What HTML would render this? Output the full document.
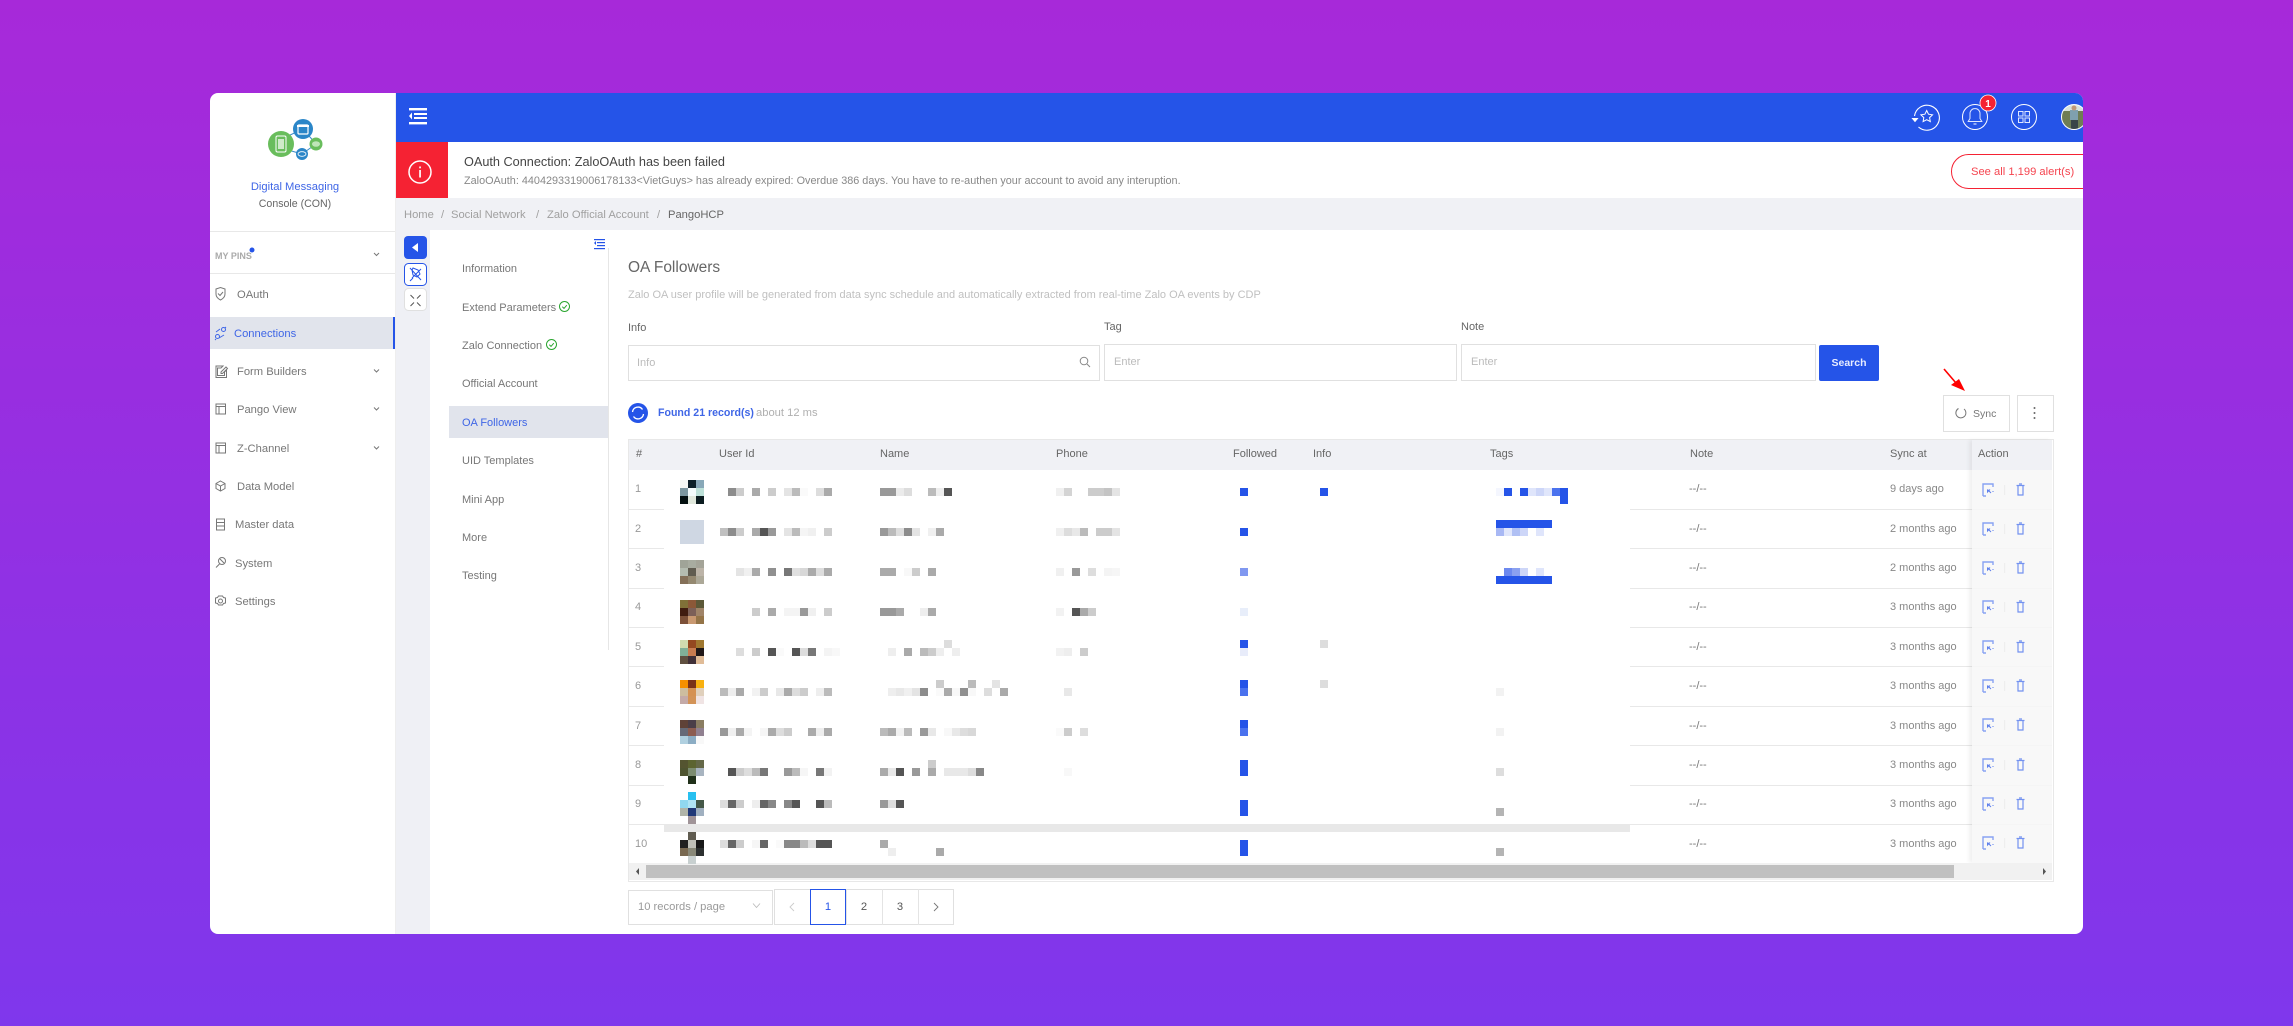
<!DOCTYPE html>
<html><head><meta charset="utf-8"><title>OA Followers</title>
<style>
html,body{margin:0;padding:0;width:2293px;height:1026px;overflow:hidden}
body{background:linear-gradient(180deg,#a729d9 0%,#7f37ec 100%);font-family:"Liberation Sans",sans-serif;position:relative}
#card{position:absolute;left:210px;top:93px;width:1873px;height:841px;border-radius:8px;overflow:hidden;background:#fff}
#in{position:absolute;left:-210px;top:-93px;width:2293px;height:1026px}
.b{position:absolute}
.t{position:absolute;white-space:nowrap;line-height:20px;height:20px;font-size:12px;color:#777;filter:blur(.25px)}
svg{position:absolute;left:0;top:0}
.m rect{width:1px;height:1px}
</style></head><body>
<div id="card"><div id="in">
<div class="b" style="left:396px;top:93px;width:1687px;height:49px;background:#2554e8"></div>
<div class="b" style="left:396px;top:142px;width:1687px;height:56px;background:#fff"></div>
<div class="b" style="left:396px;top:142px;width:52px;height:56px;background:#f52233"></div>
<div class="b" style="left:396px;top:198px;width:1687px;height:32px;background:#f0f1f5"></div>
<div class="b" style="left:395px;top:230px;width:35px;height:704px;background:#eff0f5"></div>
<div class="b" style="left:395px;top:93px;width:1px;height:841px;background:#eee"></div>
<div class="b" style="left:210px;top:231px;width:185px;height:1px;background:#e8e8e8"></div>
<div class="b" style="left:210px;top:273px;width:185px;height:1px;background:#e8e8e8"></div>
<div class="b" style="left:210px;top:317px;width:185px;height:32px;background:#e1e4ec"></div>
<div class="b" style="left:393px;top:317px;width:2px;height:32px;background:#2554e8"></div>
<div class="b" style="left:449px;top:406px;width:159px;height:32px;background:#e1e4ec"></div>
<div class="b" style="left:608px;top:248px;width:1px;height:402px;background:#e6e6e6"></div>

<span class="t" style="left:240px;width:110px;text-align:center;top:177px;font-size:11.2px;color:#3f66e6">Digital Messaging</span>
<span class="t" style="left:240px;width:110px;text-align:center;top:194px;font-size:10.6px;color:#666">Console (CON)</span>
<span class="t" style="left:215px;top:246px;font-size:9px;font-weight:bold;color:#aaa">MY PINS</span>
<span class="t" style="left:237px;top:285px;font-size:11.2px">OAuth</span>
<span class="t" style="left:234px;top:324px;font-size:11.2px;color:#3f66e6">Connections</span>
<span class="t" style="left:237px;top:362px;font-size:11.2px">Form Builders</span>
<span class="t" style="left:237px;top:400px;font-size:11.2px">Pango View</span>
<span class="t" style="left:237px;top:439px;font-size:11.2px">Z-Channel</span>
<span class="t" style="left:237px;top:477px;font-size:11.2px">Data Model</span>
<span class="t" style="left:235px;top:515px;font-size:11.2px">Master data</span>
<span class="t" style="left:235px;top:554px;font-size:11.2px">System</span>
<span class="t" style="left:235px;top:592px;font-size:11.2px">Settings</span>

<span class="t" style="left:462px;top:259px;font-size:11px">Information</span>
<span class="t" style="left:462px;top:298px;font-size:11px">Extend Parameters</span>
<span class="t" style="left:462px;top:336px;font-size:11px">Zalo Connection</span>
<span class="t" style="left:462px;top:374px;font-size:11px">Official Account</span>
<span class="t" style="left:462px;top:413px;font-size:11px;color:#3f66e6">OA Followers</span>
<span class="t" style="left:462px;top:451px;font-size:11px">UID Templates</span>
<span class="t" style="left:462px;top:490px;font-size:11px">Mini App</span>
<span class="t" style="left:462px;top:528px;font-size:11px">More</span>
<span class="t" style="left:462px;top:566px;font-size:11px">Testing</span>

<span class="t" style="left:464px;top:152px;font-size:12.7px;color:#444">OAuth Connection: ZaloOAuth has been failed</span>
<span class="t" style="left:464px;top:171px;font-size:10.85px;color:#888">ZaloOAuth: 4404293319006178133&lt;VietGuys&gt; has already expired: Overdue 386 days. You have to re-authen your account to avoid any interuption.</span>
<span class="t" style="left:404px;top:205px;font-size:11.2px;color:#a0a0a0">Home</span>
<span class="t" style="left:441px;top:205px;font-size:11.2px;color:#a0a0a0">/</span>
<span class="t" style="left:451px;top:205px;font-size:11.2px;color:#a0a0a0">Social Network</span>
<span class="t" style="left:536px;top:205px;font-size:11.2px;color:#a0a0a0">/</span>
<span class="t" style="left:547px;top:205px;font-size:11.2px;color:#a0a0a0">Zalo Official Account</span>
<span class="t" style="left:657px;top:205px;font-size:11.2px;color:#a0a0a0">/</span>
<span class="t" style="left:668px;top:205px;font-size:11.2px;color:#666">PangoHCP</span>

<div class="b" style="left:1951px;top:154px;width:160px;height:33px;border:1px solid #f52233;border-radius:18px"></div>
<span class="t" style="left:1971px;top:162px;font-size:11.2px;color:#f5444f">See all 1,199 alert(s)</span>

<span class="t" style="left:628px;top:258px;font-size:15.5px;color:#666">OA Followers</span>
<span class="t" style="left:628px;top:285px;font-size:11px;color:#c0c0c0">Zalo OA user profile will be generated from data sync schedule and automatically extracted from real-time Zalo OA events by CDP</span>
<span class="t" style="left:628px;top:318px;font-size:11px;color:#666">Info</span>
<span class="t" style="left:1104px;top:317px;font-size:11px;color:#666">Tag</span>
<span class="t" style="left:1461px;top:317px;font-size:11px;color:#666">Note</span>
<div class="b" style="left:628px;top:345px;width:470px;height:34px;border:1px solid #e0e0e0"></div>
<div class="b" style="left:1104px;top:344px;width:351px;height:35px;border:1px solid #e0e0e0"></div>
<div class="b" style="left:1461px;top:344px;width:353px;height:35px;border:1px solid #e0e0e0"></div>
<span class="t" style="left:637px;top:353px;font-size:11px;color:#bbb">Info</span>
<span class="t" style="left:1114px;top:352px;font-size:11px;color:#bbb">Enter</span>
<span class="t" style="left:1471px;top:352px;font-size:11px;color:#bbb">Enter</span>
<div class="b" style="left:1819px;top:345px;width:60px;height:36px;background:#2554e8;border-radius:2px"></div>
<span class="t" style="left:1819px;width:60px;text-align:center;top:353px;font-size:10.5px;font-weight:bold;color:#e8edff">Search</span>

<span class="t" style="left:658px;top:403px;font-size:10.6px;font-weight:bold;color:#3f66e6">Found 21 record(s)</span>
<span class="t" style="left:756px;top:403px;font-size:11.2px;color:#b0b0b0">about 12 ms</span>
<div class="b" style="left:1943px;top:395px;width:65px;height:35px;border:1px solid #e0e0e0"></div>
<div class="b" style="left:2017px;top:395px;width:35px;height:35px;border:1px solid #e0e0e0"></div>
<span class="t" style="left:1973px;top:404px;font-size:10.5px;color:#777">Sync</span>

<div class="b" style="left:628px;top:439px;width:1424px;height:441px;border:1px solid #e8e8e8"></div>
<div class="b" style="left:629px;top:440px;width:1423px;height:30px;background:#f0f1f5"></div>
<div class="b" style="left:629px;top:509px;width:1423px;height:1px;background:#e8e8e8"></div>
<div class="b" style="left:629px;top:548px;width:1423px;height:1px;background:#e8e8e8"></div>
<div class="b" style="left:629px;top:588px;width:1423px;height:1px;background:#e8e8e8"></div>
<div class="b" style="left:629px;top:627px;width:1423px;height:1px;background:#e8e8e8"></div>
<div class="b" style="left:629px;top:666px;width:1423px;height:1px;background:#e8e8e8"></div>
<div class="b" style="left:629px;top:706px;width:1423px;height:1px;background:#e8e8e8"></div>
<div class="b" style="left:629px;top:745px;width:1423px;height:1px;background:#e8e8e8"></div>
<div class="b" style="left:629px;top:785px;width:1423px;height:1px;background:#e8e8e8"></div>
<div class="b" style="left:629px;top:824px;width:1423px;height:1px;background:#e8e8e8"></div>
<div class="b" style="left:664px;top:470px;width:966px;height:393px;background:#fff"></div>
<div class="b" style="left:664px;top:824px;width:966px;height:8px;background:#e8e8e8"></div>
<div class="b" style="left:1972px;top:440px;width:80px;height:423px;background:rgba(247,247,247,.85);box-shadow:-3px 0 4px rgba(0,0,0,.06)"></div>
<div class="b" style="left:1972px;top:440px;width:80px;height:30px;background:#f0f1f5"></div>
<div class="b" style="left:629px;top:863px;width:1423px;height:17px;background:#f1f1f1"></div>
<div class="b" style="left:646px;top:865px;width:1308px;height:13px;background:#c0c0c0"></div>

<span class="t" style="left:636px;top:444px;font-size:11px;color:#666">#</span>
<span class="t" style="left:719px;top:444px;font-size:11px;color:#666">User Id</span>
<span class="t" style="left:880px;top:444px;font-size:11px;color:#666">Name</span>
<span class="t" style="left:1056px;top:444px;font-size:11px;color:#666">Phone</span>
<span class="t" style="left:1233px;top:444px;font-size:11px;color:#666">Followed</span>
<span class="t" style="left:1313px;top:444px;font-size:11px;color:#666">Info</span>
<span class="t" style="left:1490px;top:444px;font-size:11px;color:#666">Tags</span>
<span class="t" style="left:1690px;top:444px;font-size:11px;color:#666">Note</span>
<span class="t" style="left:1890px;top:444px;font-size:11px;color:#666">Sync at</span>
<span class="t" style="left:1978px;top:444px;font-size:11px;color:#666">Action</span>

<span class="t" style="left:635px;top:479px;font-size:11px;color:#999">1</span>
<span class="t" style="left:635px;top:519px;font-size:11px;color:#999">2</span>
<span class="t" style="left:635px;top:558px;font-size:11px;color:#999">3</span>
<span class="t" style="left:635px;top:597px;font-size:11px;color:#999">4</span>
<span class="t" style="left:635px;top:637px;font-size:11px;color:#999">5</span>
<span class="t" style="left:635px;top:676px;font-size:11px;color:#999">6</span>
<span class="t" style="left:635px;top:716px;font-size:11px;color:#999">7</span>
<span class="t" style="left:635px;top:755px;font-size:11px;color:#999">8</span>
<span class="t" style="left:635px;top:794px;font-size:11px;color:#999">9</span>
<span class="t" style="left:635px;top:834px;font-size:11px;color:#999">10</span>

<span class="t" style="left:1689px;top:479px;font-size:11px">--/--</span>
<span class="t" style="left:1689px;top:519px;font-size:11px">--/--</span>
<span class="t" style="left:1689px;top:558px;font-size:11px">--/--</span>
<span class="t" style="left:1689px;top:597px;font-size:11px">--/--</span>
<span class="t" style="left:1689px;top:637px;font-size:11px">--/--</span>
<span class="t" style="left:1689px;top:676px;font-size:11px">--/--</span>
<span class="t" style="left:1689px;top:716px;font-size:11px">--/--</span>
<span class="t" style="left:1689px;top:755px;font-size:11px">--/--</span>
<span class="t" style="left:1689px;top:794px;font-size:11px">--/--</span>
<span class="t" style="left:1689px;top:834px;font-size:11px">--/--</span>

<span class="t" style="left:1890px;top:479px;font-size:11px;color:#888">9 days ago</span>
<span class="t" style="left:1890px;top:519px;font-size:11px;color:#888">2 months ago</span>
<span class="t" style="left:1890px;top:558px;font-size:11px;color:#888">2 months ago</span>
<span class="t" style="left:1890px;top:597px;font-size:11px;color:#888">3 months ago</span>
<span class="t" style="left:1890px;top:637px;font-size:11px;color:#888">3 months ago</span>
<span class="t" style="left:1890px;top:676px;font-size:11px;color:#888">3 months ago</span>
<span class="t" style="left:1890px;top:716px;font-size:11px;color:#888">3 months ago</span>
<span class="t" style="left:1890px;top:755px;font-size:11px;color:#888">3 months ago</span>
<span class="t" style="left:1890px;top:794px;font-size:11px;color:#888">3 months ago</span>
<span class="t" style="left:1890px;top:834px;font-size:11px;color:#888">3 months ago</span>

<div class="b" style="left:628px;top:890px;width:143px;height:33px;border:1px solid #e0e0e0"></div>
<span class="t" style="left:638px;top:897px;font-size:11.2px;color:#999">10 records / page</span>
<div class="b" style="left:774px;top:889px;width:178px;height:34px;border:1px solid #e0e0e0"></div>
<div class="b" style="left:846px;top:889px;width:1px;height:36px;background:#e4e4e4"></div>
<div class="b" style="left:882px;top:889px;width:1px;height:36px;background:#e4e4e4"></div>
<div class="b" style="left:918px;top:889px;width:1px;height:36px;background:#e4e4e4"></div>
<div class="b" style="left:810px;top:889px;width:34px;height:34px;border:1px solid #2554e8"></div>
<span class="t" style="left:810px;width:36px;text-align:center;top:897px;font-size:11.2px;color:#2554e8">1</span>
<span class="t" style="left:846px;width:36px;text-align:center;top:897px;font-size:11.2px;color:#555">2</span>
<span class="t" style="left:882px;width:36px;text-align:center;top:897px;font-size:11.2px;color:#555">3</span>

<svg width="2293" height="1026" viewBox="0 0 2293 1026" fill="none">
<!-- topbar hamburger -->
<g fill="#fff"><rect x="409" y="108" width="18" height="2.4"/><rect x="414" y="113" width="13" height="2"/><rect x="414" y="117" width="13" height="2"/><rect x="409" y="122" width="18" height="2.4"/><path d="M412 112.5v7l-3-3.5z"/></g>
<!-- top right icons -->
<g stroke="#fff" stroke-width="1"><path d="M1914.500 116A12.500 12.500 0 1 1 1918.500 127" stroke-width="1.100"/><path d="M1912.500 118.500h5l-2.500 3z" fill="#fff"/><path d="M1926.700 110.500l1.800 3.700 4 .6-2.900 2.800.7 4-3.600-1.900-3.600 1.900.7-4-2.900-2.800 4-.6z"/>
<circle cx="1975" cy="117" r="12.500"/><path d="M1975 108.500a5 5 0 0 0-5 5v5l-1.800 3h13.600l-1.800-3v-5a5 5 0 0 0-5-5z" stroke="#dfe6ff"/><path d="M1973.500 124h3"/>
<circle cx="2024" cy="117" r="12.500"/><g stroke="#dfe6ff"><rect x="2018.500" y="111.500" width="4.500" height="4.500"/><rect x="2025" y="111.500" width="4.500" height="4.500"/><rect x="2018.500" y="118" width="4.500" height="4.500"/><rect x="2025" y="118" width="4.500" height="4.500"/></g></g>
<circle cx="1988" cy="103" r="8" fill="#f52233" stroke="#fff" stroke-width=".8"/>
<text x="1988" y="107" fill="#fff" font-size="10" font-weight="bold" text-anchor="middle" font-family="Liberation Sans">1</text>
<clipPath id="av"><circle cx="2074" cy="117" r="12.500"/></clipPath>
<g clip-path="url(#av)"><rect x="2061" y="104" width="26" height="13" fill="#d8e2dc"/><rect x="2061" y="111" width="26" height="19" fill="#6f7d55"/><rect x="2070" y="110" width="8" height="10" fill="#7fa0ae"/><circle cx="2074" cy="108" r="2.500" fill="#c09878"/><rect x="2071" y="120" width="7" height="10" fill="#3a4448"/></g>
<circle cx="2074" cy="117" r="12.500" stroke="#fff" stroke-width="1"/>
<!-- alert icon -->
<circle cx="420" cy="172" r="11" stroke="#fff" stroke-width="1.500"/><rect x="419.200" y="170" width="1.700" height="7.500" fill="#fff"/><rect x="419.200" y="166.500" width="1.700" height="1.800" fill="#fff"/>
<!-- logo -->
<path d="M288 136L303 129M303 129L316 144M316 144L302 154M288 150L302 154" stroke="#3a8cc8" stroke-width="1"/>
<circle cx="281" cy="144" r="13" fill="#69bd5c"/><rect x="276" y="136" width="10" height="16" rx="1.500" stroke="#fff" stroke-width="1"/><rect x="278" y="139" width="6" height="10" fill="#cfeac9"/>
<circle cx="303" cy="129" r="10" fill="#2b86c8"/><rect x="298" y="125" width="10" height="9" rx="1" stroke="#fff" stroke-width="1.200"/><path d="M297 126h12" stroke="#fff" stroke-width="2"/>
<circle cx="316" cy="144" r="6.500" fill="#69bd5c"/><ellipse cx="316" cy="144" rx="4" ry="2.800" fill="#bfe5b8"/>
<circle cx="302" cy="154" r="6" fill="#2b86c8"/><ellipse cx="302" cy="154" rx="4" ry="2.300" stroke="#fff" stroke-width=".8"/>
<!-- sidebar icons -->
<circle cx="252" cy="250" r="2.500" fill="#2554e8"/>
<g stroke="#777" stroke-width="1"><path d="M374 253l2.500 2.500 2.500-2.500M374 369.500l2.500 2.500 2.500-2.500M374 407.500l2.500 2.500 2.500-2.500M374 446.500l2.500 2.500 2.500-2.500"/>
<path d="M216 289l4.500-1.500 4.500 1.500v5c0 3-2.500 5-4.500 6-2-1-4.500-3-4.500-6z"/><path d="M218 293.500l2 2 3-3.500"/>
<path d="M216 366h7l-2 2h-3.500v7.500h7v-3.500l2-2v7.500H216z"/><path d="M221 372l5-5 1.500 1.500-5 5h-1.500z"/>
<rect x="216" y="404" width="9.500" height="10"/><path d="M216 406.500h9.500M219 406.500V414"/>
<rect x="216" y="443" width="9.500" height="10"/><path d="M216 445.500h9.500M219 445.500V453"/>
<path d="M220.500 481l4.500 2.500v5l-4.500 2.500-4.500-2.500v-5zM216 483.500l4.500 2.500 4.500-2.500M220.500 486v5"/>
<rect x="216.500" y="519" width="8" height="11"/><path d="M216.500 522.500h8M216.500 526h8"/>
<circle cx="222" cy="561" r="3.500"/><path d="M219.500 564l-3.500 3.500M220 559l4 4"/>
<circle cx="220.500" cy="601" r="2"/><path d="M218.500 596h4l1 1.500 2 .5v5l-2 .5-1 1.500h-4l-1-1.500-2-.5v-5l2-.5z"/>
</g>
<g stroke="#3f66e6" stroke-width="1"><circle cx="217.500" cy="336.500" r="2"/><circle cx="223.500" cy="329.500" r="2"/><path d="M216 332l4-3M219 338l5-3M216 339l-1 1M225 328l1-1"/></g>
<!-- submenu check icons -->
<g stroke="#2aa52f" stroke-width="1"><circle cx="564.500" cy="306.500" r="5"/><path d="M562.300 306.700l1.700 1.700 2.800-3.200"/><circle cx="551.500" cy="344.500" r="5"/><path d="M549.300 344.700l1.700 1.700 2.800-3.200"/></g>
<g fill="#2554e8"><rect x="594" y="239" width="11" height="1.200"/><rect x="597" y="242" width="8" height="1.200"/><rect x="597" y="245" width="8" height="1.200"/><rect x="594" y="248" width="11" height="1.200"/><path d="M596 241v4l-2-2z"/></g>
<!-- strip buttons -->
<rect x="404" y="236" width="23" height="23" rx="4" fill="#2554e8"/><path d="M418 243v9l-6-4.500z" fill="#fff"/>
<rect x="404.500" y="263.500" width="22" height="22" rx="4" fill="#fff" stroke="#2554e8"/>
<path d="M410 268l11 12M421 269l-9 9M413 268l5 2 2 4-3 3-4-2-1-5zM410 281l3-3" stroke="#2554e8"/>
<rect x="404.500" y="288.500" width="22" height="22" rx="4" fill="#fff" stroke="#e0e0e0"/>
<path d="M410.500 295l3.500 3.500M420.500 295l-3.500 3.500M410.500 306l3.500-3.500M420.500 306l-3.500-3.500" stroke="#555" stroke-width="1"/>
<!-- search -->
<circle cx="1084" cy="361" r="3.800" stroke="#888" stroke-width="1"/><path d="M1087 364l3 3" stroke="#888"/>
<!-- found icon -->
<circle cx="638" cy="413" r="10" fill="#2554e8"/><path d="M632.500 412a5.500 5.500 0 0 1 10-2.500M643.500 414a5.500 5.500 0 0 1-10 2.500" stroke="#fff" stroke-width="1.300"/>
<!-- sync -->
<path d="M1964 409a5 5 0 1 1-5.500-.5" stroke="#777" stroke-width="1"/>
<g fill="#666"><circle cx="2034.500" cy="408" r="1"/><circle cx="2034.500" cy="413" r="1"/><circle cx="2034.500" cy="418" r="1"/></g>
<path d="M1944 369l12 14" stroke="#f00" stroke-width="1.600"/><path d="M1951 385l8-6 6 12z" fill="#f00"/>
<!-- scroll arrows -->
<path d="M639 868v7l-3-3.500zM2043 868v7l3-3.500z" fill="#555"/>
<!-- pagination -->
<path d="M753 903.500l3.500 4 3.500-4" stroke="#bbb" stroke-width=".9"/>
<path d="M794 903l-4 4 4 4" stroke="#ccc" stroke-width=".9"/><path d="M934 903l4 4-4 4" stroke="#777" stroke-width=".9"/>
<!-- mosaic -->
<g class="m" shape-rendering="crispEdges" transform="translate(680,0) scale(8,8)">
<rect x="0" y="60" fill="#f4f8f4"/><rect x="1" y="60" fill="#0c2028"/><rect x="2" y="60" fill="#88a8b8"/><rect x="0" y="61" fill="#7c98a0"/><rect x="1" y="61" fill="#f4fcfc"/><rect x="2" y="61" fill="#bce0d8"/><rect x="0" y="62" fill="#041010"/><rect x="1" y="62" fill="#e0e8dc"/><rect x="2" y="62" fill="#0c1c20"/>
<rect x="6" y="61" fill="#8c8c8c"/><rect x="7" y="61" fill="#ccc"/><rect x="9" y="61" fill="#aaa"/><rect x="11" y="61" fill="#ccc"/><rect x="13" y="61" fill="#e4e4e4"/><rect x="14" y="61" fill="#bbb"/><rect x="15" y="61" fill="#fafafa"/><rect x="17" y="61" fill="#ddd"/><rect x="18" y="61" fill="#aaa"/>
<rect x="25" y="61" fill="#999"/><rect x="26" y="61" fill="#999"/><rect x="27" y="61" fill="#ebebeb"/><rect x="28" y="61" fill="#ddd"/><rect x="31" y="61" fill="#bbb"/><rect x="32" y="61" fill="#eee"/><rect x="33" y="61" fill="#555"/>
<rect x="47" y="61" fill="#f0f0f0"/><rect x="48" y="61" fill="#d4d4d4"/><rect x="51" y="61" fill="#ccc"/><rect x="52" y="61" fill="#ccc"/><rect x="53" y="61" fill="#c4c4c4"/><rect x="54" y="61" fill="#e4e4e4"/>
<rect x="70" y="61" fill="#2554e8"/><rect x="80" y="61" fill="#2554e8"/><rect x="102" y="61" fill="#f4f6fe"/><rect x="103" y="61" fill="#2554e8"/><rect x="105" y="61" fill="#2554e8"/><rect x="106" y="61" fill="#dfe5fb"/><rect x="107" y="61" fill="#cdd6f8"/><rect x="108" y="61" fill="#e0e6fb"/><rect x="109" y="61" fill="#4a72ee"/><rect x="110" y="61" fill="#2554e8"/><rect x="110" y="62" fill="#2554e8"/>

<rect x="0" y="65" fill="#cfd7e3"/><rect x="1" y="65" fill="#cfd7e3"/><rect x="2" y="65" fill="#cfd7e3"/><rect x="0" y="66" fill="#cfd7e3"/><rect x="1" y="66" fill="#cfd7e3"/><rect x="2" y="66" fill="#cfd7e3"/><rect x="0" y="67" fill="#cfd7e3"/><rect x="1" y="67" fill="#cfd7e3"/><rect x="2" y="67" fill="#cfd7e3"/>
<rect x="5" y="66" fill="#c0c0c0"/><rect x="6" y="66" fill="#8c8c8c"/><rect x="7" y="66" fill="#ccc"/><rect x="9" y="66" fill="#aaa"/><rect x="10" y="66" fill="#555"/><rect x="11" y="66" fill="#999"/><rect x="13" y="66" fill="#e4e4e4"/><rect x="14" y="66" fill="#bbb"/><rect x="15" y="66" fill="#f5f5f5"/><rect x="16" y="66" fill="#f0f0f0"/><rect x="18" y="66" fill="#ccc"/>
<rect x="25" y="66" fill="#999"/><rect x="26" y="66" fill="#bbb"/><rect x="27" y="66" fill="#ddd"/><rect x="28" y="66" fill="#8c8c8c"/><rect x="29" y="66" fill="#e4e4e4"/><rect x="31" y="66" fill="#f0f0f0"/><rect x="32" y="66" fill="#aaa"/>
<rect x="47" y="66" fill="#f0f0f0"/><rect x="48" y="66" fill="#ddd"/><rect x="49" y="66" fill="#e8e8e8"/><rect x="50" y="66" fill="#bbb"/><rect x="52" y="66" fill="#ccc"/><rect x="53" y="66" fill="#ccc"/><rect x="54" y="66" fill="#e4e4e4"/>
<rect x="70" y="66" fill="#2554e8"/>
<rect x="102" y="65" fill="#2554e8"/><rect x="103" y="65" fill="#2554e8"/><rect x="104" y="65" fill="#2554e8"/><rect x="105" y="65" fill="#2554e8"/><rect x="106" y="65" fill="#2554e8"/><rect x="107" y="65" fill="#2554e8"/><rect x="108" y="65" fill="#2554e8"/>
<rect x="102" y="66" fill="#a8b8f4"/><rect x="103" y="66" fill="#e0e6fb"/><rect x="104" y="66" fill="#b0c0f4"/><rect x="105" y="66" fill="#cdd6f8"/><rect x="107" y="66" fill="#dfe5fb"/>

<rect x="0" y="70" fill="#a0a498"/><rect x="1" y="70" fill="#a8aca0"/><rect x="2" y="70" fill="#a4a498"/><rect x="0" y="71" fill="#b4bcb0"/><rect x="1" y="71" fill="#605c50"/><rect x="2" y="71" fill="#bcb4a8"/><rect x="0" y="72" fill="#847058"/><rect x="1" y="72" fill="#948870"/><rect x="2" y="72" fill="#aca898"/>
<rect x="7" y="71" fill="#e4e4e4"/><rect x="8" y="71" fill="#f0f0f0"/><rect x="9" y="71" fill="#aaa"/><rect x="11" y="71" fill="#909090"/><rect x="13" y="71" fill="#777"/><rect x="14" y="71" fill="#e0e0e0"/><rect x="15" y="71" fill="#d8d8d8"/><rect x="16" y="71" fill="#aaa"/><rect x="17" y="71" fill="#ddd"/><rect x="18" y="71" fill="#aaa"/>
<rect x="25" y="71" fill="#aaa"/><rect x="26" y="71" fill="#aaa"/><rect x="28" y="71" fill="#f8f8f8"/><rect x="29" y="71" fill="#ccc"/><rect x="31" y="71" fill="#aaa"/>
<rect x="47" y="71" fill="#f0f0f0"/><rect x="49" y="71" fill="#999"/><rect x="51" y="71" fill="#ddd"/><rect x="53" y="71" fill="#f4f4f4"/><rect x="54" y="71" fill="#f6f6f6"/>
<rect x="70" y="71" fill="#8098f0"/>
<rect x="103" y="71" fill="#6d89ef"/><rect x="104" y="71" fill="#8aa0f0"/><rect x="105" y="71" fill="#cdd6f8"/><rect x="107" y="71" fill="#dfe5fb"/>
<rect x="102" y="72" fill="#2554e8"/><rect x="103" y="72" fill="#2554e8"/><rect x="104" y="72" fill="#2554e8"/><rect x="105" y="72" fill="#2554e8"/><rect x="106" y="72" fill="#2554e8"/><rect x="107" y="72" fill="#2554e8"/><rect x="108" y="72" fill="#2554e8"/>

<rect x="0" y="75" fill="#807038"/><rect x="1" y="75" fill="#8c5838"/><rect x="2" y="75" fill="#5c5838"/><rect x="0" y="76" fill="#401c10"/><rect x="1" y="76" fill="#7c6058"/><rect x="2" y="76" fill="#a08468"/><rect x="0" y="77" fill="#7c5038"/><rect x="1" y="77" fill="#c89870"/><rect x="2" y="77" fill="#947448"/>
<rect x="9" y="76" fill="#ccc"/><rect x="11" y="76" fill="#aaa"/><rect x="13" y="76" fill="#f4f4f4"/><rect x="14" y="76" fill="#f4f4f4"/><rect x="15" y="76" fill="#999"/><rect x="16" y="76" fill="#f0f0f0"/><rect x="18" y="76" fill="#ccc"/>
<rect x="25" y="76" fill="#999"/><rect x="26" y="76" fill="#999"/><rect x="27" y="76" fill="#aaa"/><rect x="30" y="76" fill="#eee"/><rect x="31" y="76" fill="#aaa"/>
<rect x="47" y="76" fill="#f2f2f2"/><rect x="49" y="76" fill="#555"/><rect x="50" y="76" fill="#aaa"/><rect x="51" y="76" fill="#ccc"/>
<rect x="70" y="76" fill="#e8eefa"/>

<rect x="0" y="80" fill="#d0dcb0"/><rect x="1" y="80" fill="#944820"/><rect x="2" y="80" fill="#a07830"/><rect x="0" y="81" fill="#80b098"/><rect x="1" y="81" fill="#c87c50"/><rect x="2" y="81" fill="#201818"/><rect x="0" y="82" fill="#605040"/><rect x="1" y="82" fill="#403038"/><rect x="2" y="82" fill="#e0bc98"/>
<rect x="7" y="81" fill="#ddd"/><rect x="9" y="81" fill="#ccc"/><rect x="11" y="81" fill="#555"/><rect x="12" y="81" fill="#fafafa"/><rect x="14" y="81" fill="#555"/><rect x="15" y="81" fill="#ddd"/><rect x="16" y="81" fill="#777"/><rect x="18" y="81" fill="#f4f4f4"/><rect x="19" y="81" fill="#f8f8f8"/>
<rect x="26" y="81" fill="#eee"/><rect x="28" y="81" fill="#aaa"/><rect x="30" y="81" fill="#bbb"/><rect x="31" y="81" fill="#ccc"/><rect x="32" y="81" fill="#eee"/><rect x="33" y="80" fill="#ddd"/><rect x="34" y="81" fill="#eee"/>
<rect x="47" y="81" fill="#f2f2f2"/><rect x="48" y="81" fill="#eee"/><rect x="50" y="81" fill="#ccc"/>
<rect x="70" y="80" fill="#2554e8"/><rect x="70" y="81" fill="#e8ecfa"/><rect x="80" y="80" fill="#ddd"/>

<rect x="0" y="85" fill="#f59000"/><rect x="1" y="85" fill="#7a3218"/><rect x="2" y="85" fill="#f8b010"/><rect x="0" y="86" fill="#cdbd9f"/><rect x="1" y="86" fill="#d59152"/><rect x="2" y="86" fill="#e0d0bc"/><rect x="0" y="87" fill="#c4aaa8"/><rect x="1" y="87" fill="#d39357"/><rect x="2" y="87" fill="#f0e4e4"/>
<rect x="5" y="86" fill="#bbb"/><rect x="6" y="86" fill="#eee"/><rect x="7" y="86" fill="#aaa"/><rect x="9" y="86" fill="#f2f2f2"/><rect x="10" y="86" fill="#ccc"/><rect x="12" y="86" fill="#e8e8e8"/><rect x="13" y="86" fill="#aaa"/><rect x="14" y="86" fill="#ddd"/><rect x="15" y="86" fill="#ccc"/><rect x="17" y="86" fill="#eee"/><rect x="18" y="86" fill="#bbb"/>
<rect x="26" y="86" fill="#eee"/><rect x="27" y="86" fill="#e8e8e8"/><rect x="28" y="86" fill="#f0f0f0"/><rect x="29" y="86" fill="#e4e4e4"/><rect x="30" y="86" fill="#8c8c8c"/><rect x="32" y="86" fill="#fafafa"/><rect x="33" y="86" fill="#aaa"/><rect x="34" y="86" fill="#f8f8f8"/><rect x="35" y="86" fill="#909090"/><rect x="36" y="86" fill="#f8f8f8"/><rect x="38" y="86" fill="#ddd"/><rect x="40" y="86" fill="#aaa"/>
<rect x="32" y="85" fill="#ccc"/><rect x="36" y="85" fill="#bbb"/><rect x="39" y="85" fill="#e4e4e4"/><rect x="48" y="86" fill="#e8e8e8"/>
<rect x="70" y="85" fill="#2554e8"/><rect x="70" y="86" fill="#4a72ee"/><rect x="80" y="85" fill="#ddd"/><rect x="102" y="86" fill="#f2f2f2"/>

<rect x="0" y="90" fill="#5f4238"/><rect x="1" y="90" fill="#4a3e48"/><rect x="2" y="90" fill="#8a7d62"/><rect x="0" y="91" fill="#666a78"/><rect x="1" y="91" fill="#8c5c50"/><rect x="2" y="91" fill="#908090"/><rect x="0" y="92" fill="#b0d0e0"/><rect x="1" y="92" fill="#8cadc4"/><rect x="2" y="92" fill="#f8f8f8"/>
<rect x="5" y="91" fill="#999"/><rect x="6" y="91" fill="#f0f0f0"/><rect x="7" y="91" fill="#aaa"/><rect x="8" y="91" fill="#f4f4f4"/><rect x="10" y="91" fill="#f6f6f6"/><rect x="11" y="91" fill="#aaa"/><rect x="12" y="91" fill="#ddd"/><rect x="13" y="91" fill="#ccc"/><rect x="16" y="91" fill="#aaa"/><rect x="17" y="91" fill="#eee"/><rect x="18" y="91" fill="#aaa"/>
<rect x="25" y="91" fill="#bbb"/><rect x="26" y="91" fill="#aaa"/><rect x="27" y="91" fill="#f2f2f2"/><rect x="28" y="91" fill="#bbb"/><rect x="30" y="91" fill="#999"/><rect x="31" y="91" fill="#e8e8e8"/><rect x="33" y="91" fill="#f8f8f8"/><rect x="34" y="91" fill="#e8e8e8"/><rect x="35" y="91" fill="#ddd"/><rect x="36" y="91" fill="#d8d8d8"/>
<rect x="47" y="91" fill="#fafafa"/><rect x="48" y="91" fill="#ccc"/><rect x="50" y="91" fill="#ddd"/>
<rect x="70" y="90" fill="#2554e8"/><rect x="70" y="91" fill="#4a72ee"/><rect x="102" y="91" fill="#f2f2f2"/>

<rect x="0" y="95" fill="#545430"/><rect x="1" y="95" fill="#5c6430"/><rect x="2" y="95" fill="#646848"/><rect x="0" y="96" fill="#4e5430"/><rect x="1" y="96" fill="#7c8c70"/><rect x="2" y="96" fill="#a8b4c0"/><rect x="1" y="97" fill="#20301a"/>
<rect x="6" y="96" fill="#555"/><rect x="7" y="96" fill="#ccc"/><rect x="8" y="96" fill="#ddd"/><rect x="9" y="96" fill="#bbb"/><rect x="10" y="96" fill="#777"/><rect x="13" y="96" fill="#999"/><rect x="14" y="96" fill="#bbb"/><rect x="15" y="96" fill="#f6f6f6"/><rect x="17" y="96" fill="#777"/><rect x="18" y="96" fill="#f2f2f2"/>
<rect x="25" y="96" fill="#aaa"/><rect x="26" y="96" fill="#e8e8e8"/><rect x="27" y="96" fill="#555"/><rect x="29" y="96" fill="#999"/><rect x="31" y="96" fill="#aaa"/><rect x="31" y="95" fill="#ccc"/><rect x="33" y="96" fill="#e8e8e8"/><rect x="34" y="96" fill="#e8e8e8"/><rect x="35" y="96" fill="#e8e8e8"/><rect x="36" y="96" fill="#ddd"/><rect x="37" y="96" fill="#888"/>
<rect x="48" y="96" fill="#f8f8f8"/><rect x="70" y="95" fill="#2554e8"/><rect x="70" y="96" fill="#2554e8"/><rect x="102" y="96" fill="#ddd"/>

<rect x="1" y="99" fill="#28c0f0"/><rect x="0" y="100" fill="#90d8f0"/><rect x="1" y="100" fill="#b0e4f4"/><rect x="2" y="100" fill="#445848"/><rect x="0" y="101" fill="#b0b4a8"/><rect x="1" y="101" fill="#203878"/><rect x="2" y="101" fill="#a0b0c0"/><rect x="1" y="102" fill="#a09498"/>
<rect x="5" y="100" fill="#ddd"/><rect x="6" y="100" fill="#666"/><rect x="7" y="100" fill="#ccc"/><rect x="9" y="100" fill="#eee"/><rect x="10" y="100" fill="#666"/><rect x="11" y="100" fill="#888"/><rect x="13" y="100" fill="#888"/><rect x="14" y="100" fill="#555"/><rect x="17" y="100" fill="#555"/><rect x="18" y="100" fill="#bbb"/>
<rect x="25" y="100" fill="#999"/><rect x="26" y="100" fill="#ddd"/><rect x="27" y="100" fill="#555"/>
<rect x="70" y="100" fill="#2554e8"/><rect x="70" y="101" fill="#2554e8"/><rect x="102" y="101" fill="#b4b4b4"/>

<rect x="1" y="104" fill="#605c50"/><rect x="0" y="105" fill="#202020"/><rect x="1" y="105" fill="#c0c0b8"/><rect x="2" y="105" fill="#181818"/><rect x="0" y="106" fill="#786850"/><rect x="1" y="106" fill="#888878"/><rect x="2" y="106" fill="#2c3030"/><rect x="1" y="107" fill="#c8d0d0"/>
<rect x="5" y="105" fill="#ddd"/><rect x="6" y="105" fill="#666"/><rect x="7" y="105" fill="#ccc"/><rect x="9" y="105" fill="#f6f6f6"/><rect x="10" y="105" fill="#666"/><rect x="12" y="105" fill="#fafafa"/><rect x="13" y="105" fill="#888"/><rect x="14" y="105" fill="#888"/><rect x="15" y="105" fill="#bbb"/><rect x="16" y="105" fill="#ddd"/><rect x="17" y="105" fill="#555"/><rect x="18" y="105" fill="#555"/>
<rect x="25" y="105" fill="#aaa"/><rect x="26" y="106" fill="#eee"/><rect x="32" y="106" fill="#aaa"/>
<rect x="70" y="105" fill="#2554e8"/><rect x="70" y="106" fill="#2554e8"/><rect x="102" y="106" fill="#b4b4b4"/>
</g>
<!-- action icons -->
<defs><g id="act"><path d="M-5 6V-6h10v3M-5 6h3M5 1v1" stroke="#88a2f2" stroke-width="1.400"/><path d="M-.5-.5l3.500 3.500M-.5-.5v2.500l2.500-2.500" stroke="#5f80ec" stroke-width="1"/><path d="M16.700-5v10" stroke="#ececec"/><path d="M28.500-4.500h8M30-4.500v9.500h5v-9.500M31-6h3" stroke="#7392f0" stroke-width="1.200"/></g></defs>
<use href="#act" x="1988" y="490"/><use href="#act" x="1988" y="529"/><use href="#act" x="1988" y="568"/><use href="#act" x="1988" y="607"/><use href="#act" x="1988" y="647"/><use href="#act" x="1988" y="686"/><use href="#act" x="1988" y="725"/><use href="#act" x="1988" y="765"/><use href="#act" x="1988" y="804"/><use href="#act" x="1988" y="843"/>
</svg>
</div></div>
</body></html>
